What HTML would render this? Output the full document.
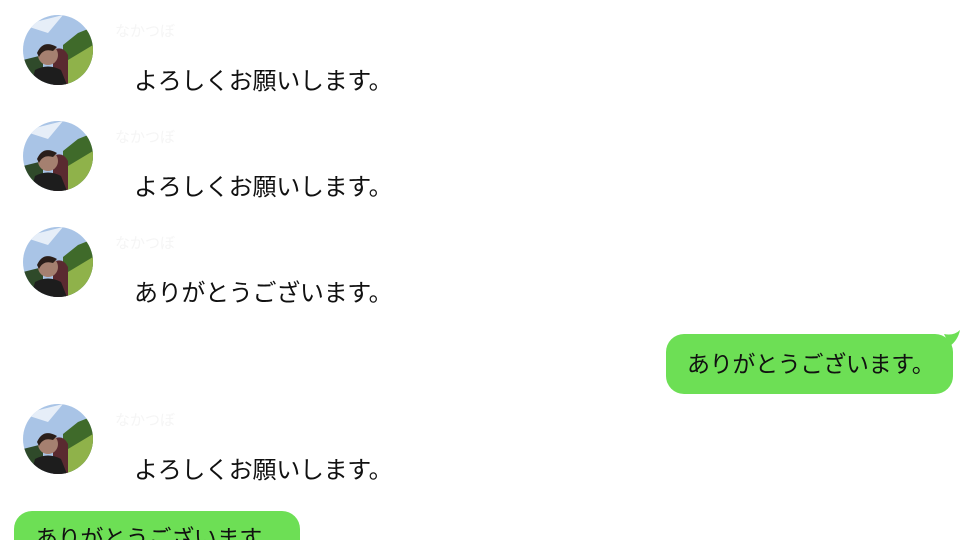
<!DOCTYPE html>
<html><head><meta charset="utf-8"><style>
html,body{margin:0;width:960px;height:540px;overflow:hidden;background:#fff;font-family:"Liberation Sans","Noto Sans CJK JP",sans-serif;position:relative}
.av{position:absolute;left:23px;width:70px;height:70px}
.nm{position:absolute;left:115px;font-size:15px;color:#f5f5f5}
.t{position:absolute;left:134px;font-size:24px;color:#111;line-height:1;white-space:nowrap;letter-spacing:-0.3px}
.b{position:absolute;background:#6ddf55;border-radius:18px;font-size:23px;line-height:1;color:#111;white-space:nowrap;letter-spacing:-0.3px}
</style></head><body>
<svg width="0" height="0" style="position:absolute"><defs>
<clipPath id="c"><circle cx="35" cy="35" r="35"/></clipPath>
<g id="a"><g clip-path="url(#c)">
<rect width="70" height="70" fill="#a9c4e6"/>
<path d="M0 10 L40 0 L25 18 Z" fill="#e6eef8"/>
<path d="M40 30 L55 18 L70 12 L70 70 L40 70Z" fill="#3f6a2a"/>
<path d="M45 45 L70 30 L70 70 L40 70Z" fill="#8fb24a"/>
<path d="M0 45 L20 40 L20 70 L0 70Z" fill="#2f4a2a"/>
<path d="M30 35 Q40 30 45 40 L45 70 L30 70Z" fill="#5a2a30"/>
<circle cx="25" cy="40" r="10" fill="#a58070"/>
<path d="M14 38 Q20 24 34 32 L30 36 Q20 33 16 42Z" fill="#2a1e1a"/>
<path d="M8 70 L12 55 Q25 48 38 55 L44 70Z" fill="#1d1d1d"/>
</g></g></defs></svg>
<svg class="av" style="top:15px"><use href="#a"/></svg>
<svg class="av" style="top:121px"><use href="#a"/></svg>
<svg class="av" style="top:227px"><use href="#a"/></svg>
<svg class="av" style="top:404px"><use href="#a"/></svg>
<div class="nm" style="top:20px">なかつぼ</div>
<div class="nm" style="top:126px">なかつぼ</div>
<div class="nm" style="top:232px">なかつぼ</div>
<div class="nm" style="top:409px">なかつぼ</div>
<div class="t" style="top:70px">よろしくお願いします。</div>
<div class="t" style="top:176px">よろしくお願いします。</div>
<div class="t" style="top:282px">ありがとうございます。</div>
<div class="t" style="top:459px">よろしくお願いします。</div>
<div class="b" style="left:666px;top:334px;width:287px;height:60px"><span style="position:absolute;left:21px;top:19px">ありがとうございます。</span></div>
<svg style="position:absolute;left:944px;top:330px" width="16" height="20"><path d="M0 4 Q10 6 16 0 Q14 10 6 16Z" fill="#6ddf55"/></svg>
<div class="b" style="left:14px;top:511px;width:286px;height:29px;border-radius:18px 18px 0 0;overflow:hidden"><span style="position:absolute;left:21px;top:16px">ありがとうございます。</span></div>
</body></html>
